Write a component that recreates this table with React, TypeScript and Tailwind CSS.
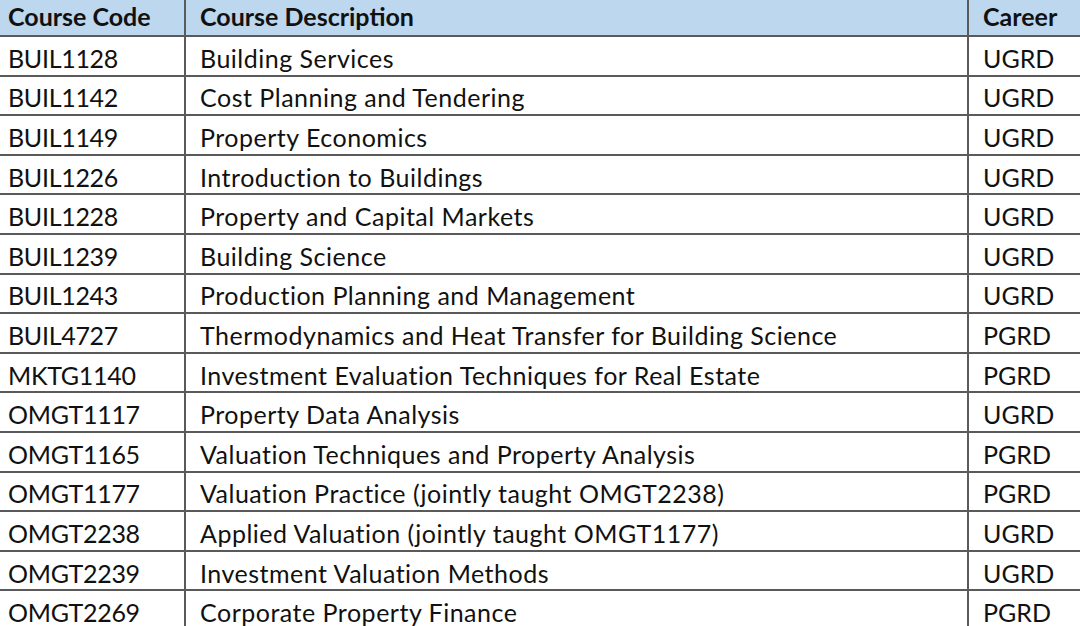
const rows: [string, string, string][] = [
  ["BUIL1128", "Building Services", "UGRD"],
  ["BUIL1142", "Cost Planning and Tendering", "UGRD"],
  ["BUIL1149", "Property Economics", "UGRD"],
  ["BUIL1226", "Introduction to Buildings", "UGRD"],
  ["BUIL1228", "Property and Capital Markets", "UGRD"],
  ["BUIL1239", "Building Science", "UGRD"],
  ["BUIL1243", "Production Planning and Management", "UGRD"],
  ["BUIL4727", "Thermodynamics and Heat Transfer for Building Science", "PGRD"],
  ["MKTG1140", "Investment Evaluation Techniques for Real Estate", "PGRD"],
  ["OMGT1117", "Property Data Analysis", "UGRD"],
  ["OMGT1165", "Valuation Techniques and Property Analysis", "PGRD"],
  ["OMGT1177", "Valuation Practice (jointly taught OMGT2238)", "PGRD"],
  ["OMGT2238", "Applied Valuation (jointly taught OMGT1177)", "UGRD"],
  ["OMGT2239", "Investment Valuation Methods", "UGRD"],
  ["OMGT2269", "Corporate Property Finance", "PGRD"],
];

export default function App() {
  return (
    <div className="h-[626px] w-[1080px] overflow-hidden bg-white font-['Lato',sans-serif] text-[25px] leading-[30px] text-[#111]">
      <table className="w-[1080px] table-fixed border-collapse">
        <colgroup>
          <col className="w-[185px]" />
          <col className="w-[783px]" />
          <col className="w-[112px]" />
        </colgroup>
        <thead>
          <tr className="h-[36px] bg-[#bdd7ee] font-bold">
            <th className="border-b-2 border-r-2 border-[#5a5a5a] pb-[3px] pl-[8px] text-left font-bold">Course Code</th>
            <th className="border-b-2 border-r-2 border-[#5a5a5a] pb-[3px] pl-[14px] text-left font-bold">Course Description</th>
            <th className="border-b-2 border-[#5a5a5a] pb-[3px] pl-[14px] text-left font-bold">Career</th>
          </tr>
        </thead>
        <tbody>
          {rows.map(([code, desc, career]) => (
            <tr key={code} className="h-[39.6px]">
              <td className="border-b-2 border-r-2 border-[#5a5a5a] pt-[4px] pl-[8px] tracking-[-0.3px]">{code}</td>
              <td className="border-b-2 border-r-2 border-[#5a5a5a] pt-[4px] pl-[14px] tracking-[0.5px]">{desc}</td>
              <td className="border-b-2 border-[#5a5a5a] pt-[4px] pl-[14px]">{career}</td>
            </tr>
          ))}
        </tbody>
      </table>
    </div>
  );
}
